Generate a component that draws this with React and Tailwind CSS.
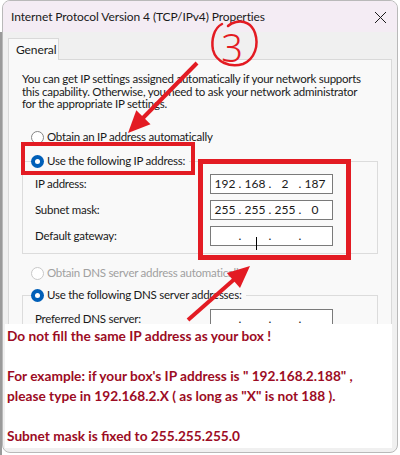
import React from "react";

function Radio({ checked, disabled }) {
  if (checked) {
    return (
      <span className="flex h-[13px] w-[13px] shrink-0 items-center justify-center rounded-full bg-[#005fb8]">
        <span className="h-[5px] w-[5px] rounded-full bg-white" />
      </span>
    );
  }
  return (
    <span
      className={
        "h-[13px] w-[13px] shrink-0 rounded-full border bg-white " +
        (disabled ? "border-[#c8c8c8]" : "border-[#858585]")
      }
    />
  );
}

function IpBox({ parts, cursor }) {
  return (
    <div className="flex h-[20px] w-[123px] items-center border border-[#7a7a7a] bg-white pl-[1px] text-[12px] tracking-normal text-[#1a1a1a]">
      {[0, 1, 2, 3].map((i) => (
        <React.Fragment key={i}>
          <span className="relative flex w-[26px] justify-center">
            {parts ? parts[i] : ""}
            {cursor && i === 1 ? (
              <span className="absolute left-[14px] top-[1px] h-[13px] w-[1px] bg-black" />
            ) : null}
          </span>
          {i < 3 ? <span className="flex w-[4px] justify-center leading-none">.</span> : null}
        </React.Fragment>
      ))}
    </div>
  );
}

function Row({ label, children }) {
  return (
    <div className="flex h-[20px] items-center pl-[12px]">
      <span className="w-[175px]">{label}</span>
      {children}
    </div>
  );
}

export default function App() {
  return (
    <div className="relative flex h-[455px] w-[400px] overflow-hidden whitespace-nowrap bg-white font-['Lato',sans-serif] text-[11.5px] tracking-[-0.25px] text-[#1a1a1a]">
      <div className="mt-[32px] w-[2px] shrink-0 bg-[#9a9a9a]" />
      <div className="flex h-[453px] w-[396px] flex-col overflow-hidden rounded-lg border border-[#b9b9b9] bg-[#f0f0f0]">
        <div className="flex h-[31px] shrink-0 items-center justify-between bg-[#f4ecf4] pl-[8px] pr-[10px]">
          <span className="text-[12px] tracking-[-0.1px]">Internet Protocol Version 4 (TCP/IPv4) Properties</span>
          <svg width="13" height="13" viewBox="0 0 13 13" className="mt-[1px]">
            <path d="M1 1 L12 12 M12 1 L1 12" stroke="#1a1a1a" strokeWidth="1" />
          </svg>
        </div>
        <div className="flex flex-1 flex-col px-[5px] pt-[6px]">
          <div className="relative z-10 -mb-px flex h-[22px] w-[51px] items-center border border-b-0 border-[#d9d9d9] bg-[#f9f9f9] pl-[7px] text-[12px] tracking-[-0.1px]">
            General
          </div>
          <div className="flex flex-1 flex-col border border-[#d9d9d9] bg-[#f9f9f9] px-[13px] pt-[13px]">
            <p className="leading-[12.7px]">
              You can get IP settings assigned automatically if your network supports
              <br />
              this capability. Otherwise, you need to ask your network administrator
              <br />
              for the appropriate IP settings.
            </p>
            <div className="mt-[19px] flex h-[14px] items-center gap-[3px] pl-[9px]">
              <Radio />
              <span>Obtain an IP address automatically</span>
            </div>
            <div className="mt-[17px] flex flex-col border border-[#dcdcdc] pb-[7px]">
              <div className="-mt-[8px] ml-[8px] flex h-[14px] w-fit items-center gap-[3px] bg-[#f9f9f9] pr-[4px]">
                <Radio checked />
                <span>Use the following IP address:</span>
              </div>
              <div className="mt-[6px] flex flex-col gap-[6px]">
                <Row label="IP address:">
                  <IpBox parts={["192", "168", "2", "187"]} />
                </Row>
                <Row label="Subnet mask:">
                  <IpBox parts={["255", "255", "255", "0"]} />
                </Row>
                <Row label="Default gateway:">
                  <IpBox cursor />
                </Row>
              </div>
            </div>
            <div className="mt-[12px] flex h-[14px] items-center gap-[3px] pl-[9px] text-[#a0a0a0]">
              <Radio disabled />
              <span>Obtain DNS server address automatically</span>
            </div>
            <div className="mt-[15px] flex flex-1 flex-col border border-[#dcdcdc] pb-[6px]">
              <div className="-mt-[8px] ml-[8px] flex h-[14px] w-fit items-center gap-[3px] bg-[#f9f9f9] pr-[4px]">
                <Radio checked />
                <span>Use the following DNS server addresses:</span>
              </div>
              <div className="mt-[7px] flex flex-col gap-[6px]">
                <Row label="Preferred DNS server:">
                  <IpBox />
                </Row>
              </div>
            </div>
            <div className="h-[40px] shrink-0" />
          </div>
          <div className="h-[8px] shrink-0" />
        </div>
      </div>

      <div className="absolute left-[5px] top-[324px] h-[124px] w-[387px] bg-white pl-[2px] pt-[2px] font-['Lato',sans-serif] text-[13.7px] font-bold leading-[20px] tracking-normal text-[#9c0c24]">
        <p>Do not fill the same IP address as your box !</p>
        <p>&nbsp;</p>
        <p>For example: if your box's IP address is " 192.168.2.188" ,</p>
        <p>please type in 192.168.2.X ( as long as "X" is not 188 ).</p>
        <p>&nbsp;</p>
        <p>Subnet mask is fixed to 255.255.255.0</p>
      </div>

      <svg className="pointer-events-none absolute left-0 top-0" width="400" height="455" viewBox="0 0 400 455">
        <rect x="23" y="144" width="170" height="29" fill="none" stroke="#e31b23" strokeWidth="4" />
        <rect x="200.5" y="161.5" width="148" height="96" fill="none" stroke="#e31b23" strokeWidth="5" />
        <line x1="197" y1="63" x2="140" y2="121" stroke="#e31b23" strokeWidth="4" />
        <polygon points="128,133 150.5,124.3 136.3,110.3" fill="#e31b23" />
        <line x1="188" y1="320" x2="238" y2="276" stroke="#e31b23" strokeWidth="4" />
        <polygon points="250,266 240,288 226.8,273" fill="#e31b23" />
        <path
          d="M222 24 C 214 28, 211 40, 213 50 C 216 62, 230 68, 243 64 C 255 59, 259 45, 255 33 C 252 24, 244 20, 236 22 C 231 23, 229 25, 228 26"
          fill="none"
          stroke="#e31b23"
          strokeWidth="2.5"
          strokeLinecap="round"
        />
        <text x="232" y="62" textAnchor="middle" fontFamily="Noto Sans, sans-serif" fontWeight="300" fontSize="38" fill="#e31b23">3</text>
      </svg>
    </div>
  );
}
